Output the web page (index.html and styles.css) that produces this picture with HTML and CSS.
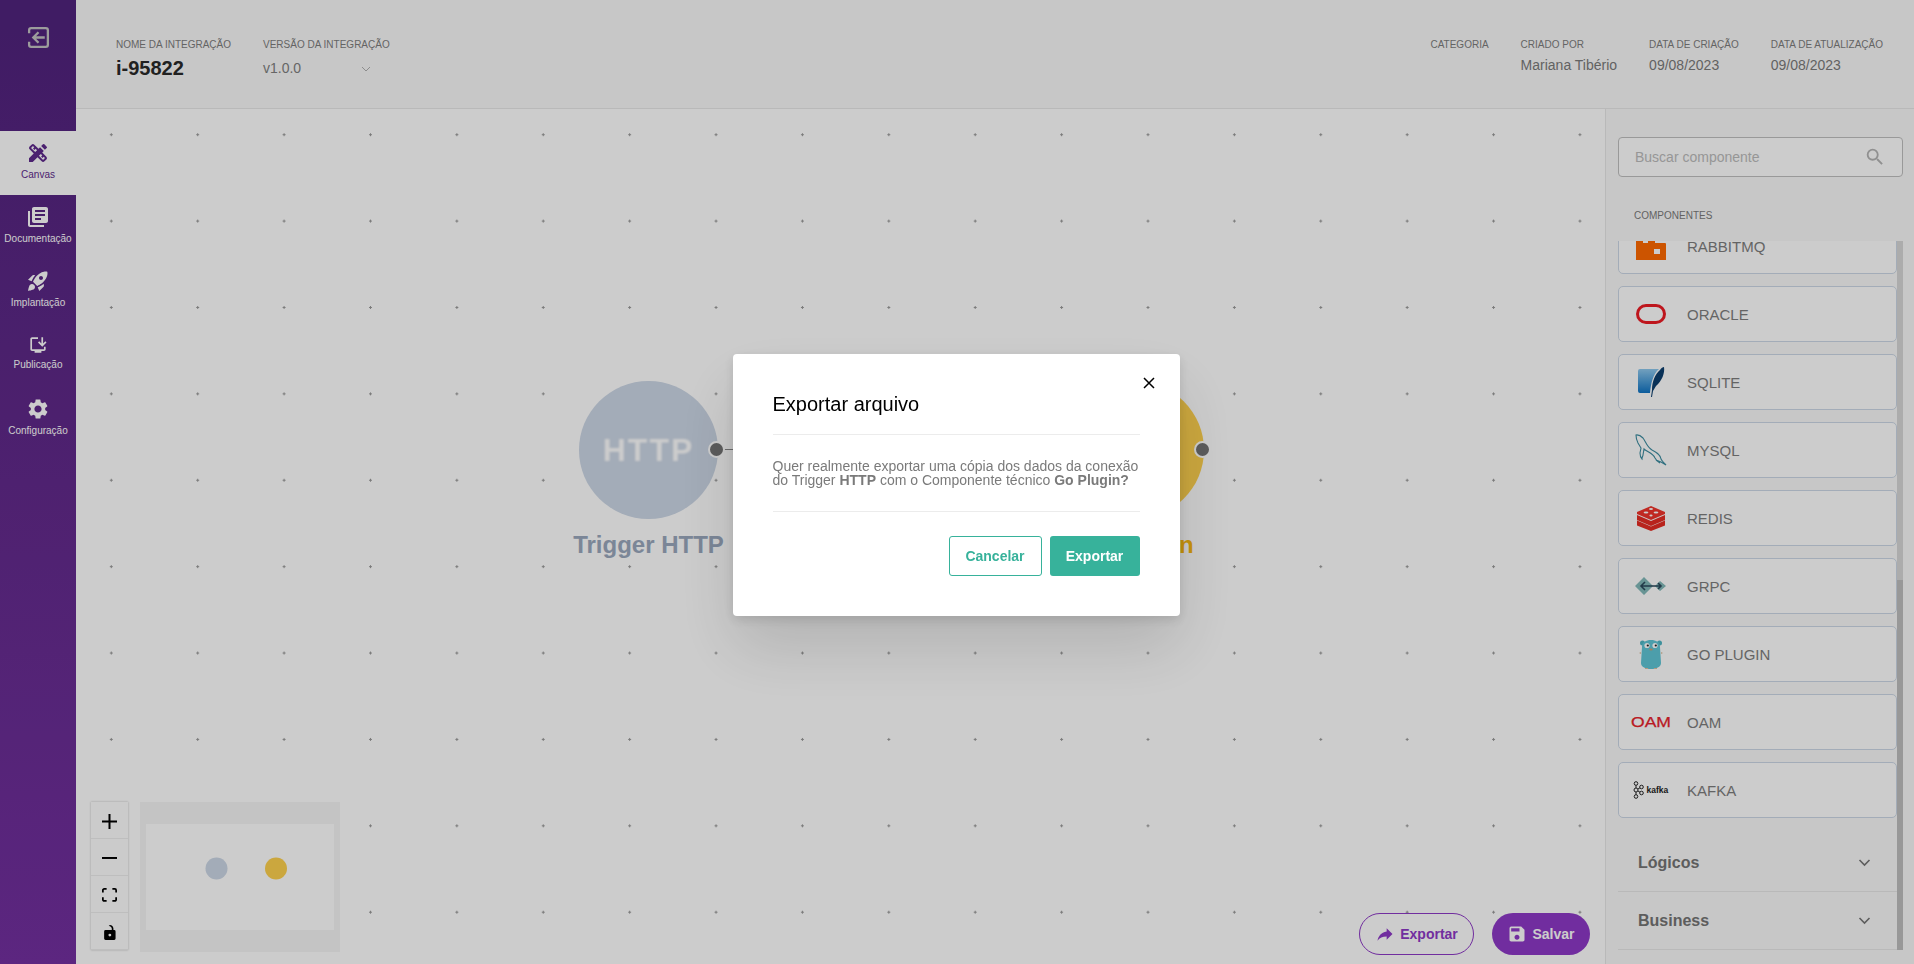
FILE: index.html
```html
<!DOCTYPE html>
<html lang="pt-BR">
<head>
  <meta charset="UTF-8">
  <title>Integração i-95822</title>
  <link rel="stylesheet" href="styles.css">
</head>
<body>

<div class="page">

  <!-- Menu lateral -->
  <nav class="side">
    <div class="side-top">
      <svg class="back-icon" viewBox="0 0 24 24" fill="none" stroke="currentColor" stroke-width="2.200"><path d="M3 8V5a2 2 0 0 1 2-2h14a2 2 0 0 1 2 2v14a2 2 0 0 1-2 2H5a2 2 0 0 1-2-2v-3"/><path d="M18 12H7M12 7l-5 5 5 5"/></svg>
    </div>
    <a class="side-item active">
      <svg viewBox="0 0 24 24"><path d="M16.24 11.51l1.57-1.57-3.75-3.75-1.57 1.57-4.14-4.13c-.78-.78-2.05-.78-2.83 0l-1.9 1.9c-.78.78-.78 2.05 0 2.83l4.13 4.13L3 17.25V21h3.75l4.76-4.76 4.13 4.13c.95.95 2.23.6 2.83 0l1.9-1.9c.78-.78.78-2.05 0-2.83l-4.13-4.13zm-7.06-.44L5.04 6.94l1.89-1.9L8.2 6.31 7.02 7.5l1.41 1.41 1.19-1.19 1.45 1.45-1.89 1.9zm7.88 7.89l-4.13-4.14 1.9-1.9 1.45 1.45-1.19 1.19 1.41 1.41 1.19-1.19 1.27 1.27-1.9 1.91zM20.71 7.04a.996.996 0 0 0 0-1.41l-2.34-2.34a1.001 1.001 0 0 0-1.41 0l-1.83 1.83 3.75 3.75 1.83-1.83z"/></svg>
      <span>Canvas</span>
    </a>
    <a class="side-item">
      <svg viewBox="0 0 24 24"><path d="M4 6H2v14c0 1.1.9 2 2 2h14v-2H4V6zm16-4H8c-1.1 0-2 .9-2 2v12c0 1.1.9 2 2 2h12c1.1 0 2-.9 2-2V4c0-1.1-.9-2-2-2zm-1 9H9V9h10v2zm-4 4H9v-2h6v2zm4-8H9V5h10v2z"/></svg>
      <span>Documentação</span>
    </a>
    <a class="side-item">
      <svg viewBox="0 0 24 24"><path d="M9.19 6.35c-2.04 2.29-3.44 5.58-3.57 5.89L2 10.69l4.05-4.05c.47-.47 1.15-.68 1.81-.55l1.33.26zM11.17 17s3.74-1.55 5.89-3.7c5.4-5.4 4.5-9.62 4.21-10.57-.95-.3-5.17-1.19-10.57 4.21C8.55 9.09 7 12.83 7 12.83L11.17 17zm6.48-2.19c-2.29 2.04-5.58 3.44-5.89 3.57L13.31 22l4.05-4.05c.47-.47.68-1.15.55-1.81l-.26-1.33zM9 18c0 .83-.34 1.58-.88 2.12C6.94 21.3 2 22 2 22s.7-4.94 1.88-6.12C4.42 15.34 5.17 15 6 15c1.66 0 3 1.34 3 3zm4-9c0-1.1.9-2 2-2s2 .9 2 2-.9 2-2 2-2-.9-2-2z"/></svg>
      <span>Implantação</span>
    </a>
    <a class="side-item tight">
      <svg viewBox="0 0 24 24"><path d="M19 17H5V5h7V3H5c-1.1 0-2 .9-2 2v12c0 1.1.9 2 2 2h3v2h8v-2h3c1.1 0 2-.9 2-2v-3h-2v3z"/><path d="M17 14l5-5-1.41-1.41L18 10.17V3h-2v7.17l-2.59-2.58L12 9z"/></svg>
      <span>Publicação</span>
    </a>
    <a class="side-item">
      <svg viewBox="0 0 24 24"><path d="M19.14 12.94c.04-.3.06-.61.06-.94 0-.32-.02-.64-.07-.94l2.03-1.58a.49.49 0 0 0 .12-.61l-1.92-3.32a.488.488 0 0 0-.59-.22l-2.39.96c-.5-.38-1.03-.7-1.62-.94l-.36-2.54a.484.484 0 0 0-.48-.41h-3.84c-.24 0-.43.17-.47.41l-.36 2.54c-.59.24-1.13.57-1.62.94l-2.39-.96c-.22-.08-.47 0-.59.22L2.74 8.87c-.12.21-.08.47.12.61l2.03 1.58c-.05.3-.09.63-.09.94s.02.64.07.94l-2.03 1.58a.49.49 0 0 0-.12.61l1.92 3.32c.12.22.37.29.59.22l2.39-.96c.5.38 1.03.7 1.62.94l.36 2.54c.05.24.24.41.48.41h3.84c.24 0 .44-.17.47-.41l.36-2.54c.59-.24 1.13-.56 1.62-.94l2.39.96c.22.08.47 0 .59-.22l1.92-3.32c.12-.22.07-.47-.12-.61l-2.01-1.58zM12 15.6c-1.98 0-3.6-1.62-3.6-3.6s1.62-3.6 3.6-3.6 3.6 1.62 3.6 3.6-1.62 3.6-3.6 3.6z"/></svg>
      <span>Configuração</span>
    </a>
  </nav>

  <div class="main">

    <!-- Cabeçalho -->
    <header class="top">
      <div class="field">
        <label>NOME DA INTEGRAÇÃO</label>
        <div class="name">i-95822</div>
      </div>
      <div class="field">
        <label>VERSÃO DA INTEGRAÇÃO</label>
        <div class="version">
          <span>v1.0.0</span>
          <svg viewBox="0 0 24 24" fill="none" stroke="currentColor" stroke-width="2"><path d="M4 8l8 8 8-8"/></svg>
        </div>
      </div>
      <div class="top-right">
        <div class="field"><label>CATEGORIA</label></div>
        <div class="field"><label>CRIADO POR</label><div class="value">Mariana Tibério</div></div>
        <div class="field"><label>DATA DE CRIAÇÃO</label><div class="value">09/08/2023</div></div>
        <div class="field"><label>DATA DE ATUALIZAÇÃO</label><div class="value">09/08/2023</div></div>
      </div>
    </header>

    <div class="work">

      <!-- Canvas -->
      <section class="canvas">
        <div class="edge"></div>

        <div class="node node-http">
          <div class="circle"><span>HTTP</span></div>
          <div class="port"></div>
          <div class="node-label">Trigger HTTP</div>
        </div>

        <div class="node node-go">
          <div class="circle"></div>
          <div class="port"></div>
          <div class="node-label">Go Plugin</div>
        </div>

        <div class="controls">
          <button><svg viewBox="0 0 32 32"><path d="M32 18.133H18.133V32h-4.266V18.133H0v-4.266h13.867V0h4.266v13.867H32z"/></svg></button>
          <button><svg viewBox="0 0 32 5"><path d="M0 0h32v4.2H0z"/></svg></button>
          <button><svg viewBox="0 0 32 30"><path d="M3.692 4.63c0-.53.4-.938.939-.938h5.215V0H4.708C2.13 0 0 2.054 0 4.63v5.216h3.692V4.631zM27.354 0h-5.2v3.692h5.17c.53 0 .984.4.984.939v5.215H32V4.631A4.624 4.624 0 0027.354 0zm.954 24.83c0 .532-.4.94-.939.94h-5.215v3.768h5.215c2.577 0 4.631-2.13 4.631-4.707v-5.139h-3.692v5.139zm-23.677.94c-.531 0-.939-.4-.939-.94v-5.138H0v5.139c0 2.577 2.13 4.707 4.708 4.707h5.138V25.77H4.631z"/></svg></button>
          <button><svg class="lock" viewBox="0 0 25 32"><path d="M21.333 10.667H19.81V7.619C19.81 3.429 16.38 0 12.19 0c-4.114 1.828-1.37 2.133-.305 2.438 1.676.305 4.42 2.59 4.42 5.181v3.048H3.047A3.056 3.056 0 000 13.714v15.238A3.056 3.056 0 003.048 32h18.285a3.056 3.056 0 003.048-3.048V13.714a3.056 3.056 0 00-3.048-3.047zM12.19 24.533a3.056 3.056 0 01-3.047-3.047 3.056 3.056 0 013.047-3.048 3.056 3.056 0 013.048 3.048 3.056 3.056 0 01-3.048 3.047z"/></svg></button>
        </div>

        <svg class="minimap" viewBox="0 0 200 150">
          <rect width="200" height="150" fill="#f6f6f6"/>
          <rect x="6" y="22" width="188" height="106" fill="#fff"/>
          <circle cx="76.5" cy="66.500" r="11" fill="#ccd7e6"/>
          <circle cx="136" cy="66.500" r="11" fill="#fed14e"/>
        </svg>

        <div class="actions">
          <button class="btn-round outline">
            <svg viewBox="0 0 24 24"><path d="M14 9V5l7 7-7 7v-4.1c-5 0-8.5 1.6-11 5.1 1-5 4-10 11-11z"/></svg>
            Exportar
          </button>
          <button class="btn-round solid">
            <svg viewBox="0 0 24 24"><path d="M17 3H5a2 2 0 0 0-2 2v14c0 1.1.9 2 2 2h14c1.1 0 2-.9 2-2V7l-4-4zm-5 16c-1.66 0-3-1.34-3-3s1.34-3 3-3 3 1.34 3 3-1.34 3-3 3zm3-10H5V5h10v4z"/></svg>
            Salvar
          </button>
        </div>
      </section>

      <!-- Componentes -->
      <aside class="panel">
        <div class="panel-head">
          <div class="search">
            <span>Buscar componente</span>
            <svg viewBox="0 0 24 24"><path d="M15.5 14h-.79l-.28-.27A6.47 6.47 0 0 0 16 9.5 6.5 6.5 0 1 0 9.5 16c1.61 0 3.09-.59 4.23-1.57l.27.28v.79l5 4.99L20.49 19l-4.99-5zm-6 0C7.01 14 5 11.99 5 9.5S7.01 5 9.5 5 14 7.01 14 9.5 11.99 14 9.5 14z"/></svg>
          </div>
          <div class="panel-title">COMPONENTES</div>
        </div>

        <div class="panel-scroll">
          <div class="list">
            <div class="comp first">
              <div class="logo"><svg width="30" height="30" viewBox="0 0 30 30"><path fill="#ff6a00" d="M0 29V2h7v10h5V2h7v10h10a1 1 0 0 1 1 1v16z"/><rect x="18" y="18" width="6" height="5" fill="#fff"/></svg></div>
              <span>RABBITMQ</span>
            </div>
            <div class="comp">
              <div class="logo"><svg width="30" height="20" viewBox="0 0 30 20"><rect x="1.500" y="1.500" width="27" height="17" rx="8.500" fill="none" stroke="#ee1c25" stroke-width="3"/></svg></div>
              <span>ORACLE</span>
            </div>
            <div class="comp">
              <div class="logo"><svg width="28" height="30" viewBox="0 0 28 30">
                <defs><linearGradient id="sq" x1="0" y1="0" x2="0" y2="1"><stop offset="0" stop-color="#8fc9ee"/><stop offset="1" stop-color="#0f74c4"/></linearGradient></defs>
                <path fill="url(#sq)" d="M3 2h19c-6 5-8 14-9 24H3a2 2 0 0 1-2-2V4a2 2 0 0 1 2-2z"/>
                <path fill="#0d3f6e" d="M27 0c1 6-2 14-8 19l-3 5-1 6h-1l1-7c0-8 3-16 8-20 1-2 3-3 4-3z"/>
              </svg></div>
              <span>SQLITE</span>
            </div>
            <div class="comp">
              <div class="logo"><svg width="32" height="32" viewBox="0 0 32 32" fill="none" stroke="#3d8ca0" stroke-width="1.100"><path d="M1 1c3-.5 5 1 7 3 3 4 4 9 9 12 4 2 8 4 9 9 1 2 3 4 5 6l-5-3-5-2 4 3c-2-1-4-3-5-5-2-5-8-6-11-9l-1 6c0 1-1 2-1 4-2-2-2-4-2-6l1-5-3-5C2 7 1 4 1 1z"/></svg></div>
              <span>MYSQL</span>
            </div>
            <div class="comp">
              <div class="logo"><svg width="28" height="25" viewBox="0 0 28 25">
                <path fill="#e72c23" d="M0 14.500v5l14 5.500 14-5.500v-5l-14 6zM0 9v5l14 6 14-6V9l-14 6z"/>
                <path fill="#f0342b" d="M14 0L0 6v2l14 6 14-6V6z"/>
                <ellipse cx="14" cy="3" rx="2" ry="1" fill="#fff"/><ellipse cx="9" cy="6.500" rx="2.400" ry="1.100" fill="#fff"/><ellipse cx="19" cy="6.500" rx="2.400" ry="1.100" fill="#fff"/><ellipse cx="14" cy="9.500" rx="1.600" ry="1" fill="#fff"/>
              </svg></div>
              <span>REDIS</span>
            </div>
            <div class="comp">
              <div class="logo"><svg width="32" height="18" viewBox="0 0 32 18">
                <path fill="#82b9b9" d="M0 9l9-9 9 9-9 9zM20 9l5-5 6 5-6 5z"/>
                <path fill="none" stroke="#2b4a5c" stroke-width="1.600" d="M6 9h20M10 5L6 9l4 4M23 6l3 3-3 3"/>
              </svg></div>
              <span>GRPC</span>
            </div>
            <div class="comp">
              <div class="logo"><svg width="24" height="30" viewBox="0 0 24 30">
                <circle cx="3.500" cy="4" r="2.500" fill="#4fb6c4"/><circle cx="20.500" cy="4" r="2.500" fill="#4fb6c4"/>
                <path fill="#5fc6d6" d="M3 8c0-5 4-7 9-7s9 2 9 7l1 16c0 4-5 6-10 6S2 28 2 24z"/>
                <circle cx="8" cy="6.500" r="2.600" fill="#fff"/><circle cx="16" cy="6.500" r="2.600" fill="#fff"/>
                <circle cx="8.800" cy="6.500" r="1.100" fill="#222"/><circle cx="16.800" cy="6.500" r="1.100" fill="#222"/>
                <ellipse cx="12" cy="10.500" rx="1.800" ry="1.100" fill="#c9a27a"/>
                <path fill="#e0c0a0" d="M0 14l2-1v2zM24 14l-2-1v2zM6 29h3v1H6zM15 29h3v1h-3z"/>
              </svg></div>
              <span>GO PLUGIN</span>
            </div>
            <div class="comp">
              <div class="logo"><svg class="logo-text" width="40" height="12" viewBox="0 0 40 12"><text class="oam-text" x="0" y="11" textLength="40" lengthAdjust="spacingAndGlyphs">OAM</text></svg></div>
              <span>OAM</span>
            </div>
            <div class="comp">
              <div class="logo"><svg class="logo-text" width="36" height="18" viewBox="0 0 36 18" fill="none" stroke="#222" stroke-width="1">
                <circle cx="3" cy="2.500" r="1.800"/><circle cx="3" cy="9" r="2"/><circle cx="3" cy="15.500" r="1.800"/><circle cx="8.500" cy="6" r="1.800"/><circle cx="8.500" cy="12" r="1.800"/>
                <path d="M3 4.300v2.700M3 11v2.700M5 8l1.900-1.100M5 10l1.900 1.100"/>
                <text class="kafka-text" x="13.500" y="12">kafka</text>
              </svg></div>
              <span>KAFKA</span>
            </div>

            <div class="acc first-acc">
              <b>Lógicos</b>
              <svg viewBox="0 0 24 24" fill="none" stroke="currentColor" stroke-width="2.600"><path d="M4 8l8 8 8-8"/></svg>
            </div>
            <div class="acc">
              <b>Business</b>
              <svg viewBox="0 0 24 24" fill="none" stroke="currentColor" stroke-width="2.600"><path d="M4 8l8 8 8-8"/></svg>
            </div>
          </div>
          <div class="scrollbar"><div class="thumb"></div></div>
        </div>
      </aside>
    </div>
  </div>
</div>

<!-- Modal -->
<div class="overlay">
  <div class="modal">
    <button class="modal-close"><svg viewBox="0 0 12 12" fill="none" stroke="#000" stroke-width="1.500"><path d="M1 1l10 10M11 1L1 11"/></svg></button>
    <h2>Exportar arquivo</h2>
    <p>Quer realmente exportar uma cópia dos dados da conexão do Trigger <b>HTTP</b> com o Componente técnico <b>Go Plugin?</b></p>
    <div class="modal-btns">
      <button class="btn-cancel">Cancelar</button>
      <button class="btn-ok">Exportar</button>
    </div>
  </div>
</div>

</body>
</html>
```

FILE: styles.css
```css
/* General */
* {
  box-sizing: border-box;
}

body {
  margin: 0;
  font-family: "Liberation Sans", Arial, sans-serif;
  color: #808080;
  overflow: hidden;
}

button {
  font-family: inherit;
  cursor: pointer;
}

svg:not([fill]) {
  fill: currentColor;
}

.page {
  display: flex;
  height: 100vh;
}

/* Side menu */
.side {
  width: 76px;
  flex: none;
  background: linear-gradient(180deg, #50237d 0%, #622a8c 50%, #7330a0 100%);
  color: #fff;
}

.side-top {
  height: 131px;
  display: flex;
  justify-content: center;
  padding-top: 25px;
}

.back-icon {
  width: 25px;
  height: 25px;
  color: #c4c4c4;
}

.side-item {
  height: 64px;
  padding-top: 10px;
  display: flex;
  flex-direction: column;
  align-items: center;
  gap: 4px;
  font-size: 10px;
  line-height: 12px;
}

.side-item svg {
  width: 24px;
  height: 24px;
}

.side-item.active {
  background: #fff;
  color: #5e2a8c;
}

.side-item.tight {
  gap: 2px;
}

.side-item.tight svg {
  transform: scale(.85);
}

/* Header */
.main {
  flex: 1;
  min-width: 0;
  display: flex;
  flex-direction: column;
}

.top {
  height: 109px;
  flex: none;
  display: flex;
  gap: 32px;
  padding: 39px 31px 0 40px;
  background: #f9f9f9;
  border-bottom: 1px solid #e8e8e8;
}

.top-right {
  margin-left: auto;
  display: flex;
  gap: 32px;
}

.field label {
  display: block;
  font-size: 10px;
  line-height: 12px;
  color: #7d7d7d;
  white-space: nowrap;
}

.name {
  margin-top: 5px;
  font-size: 20px;
  line-height: 24px;
  font-weight: 700;
  color: #2a2a2a;
}

.version {
  margin-top: 9px;
  display: flex;
  align-items: center;
  font-size: 14px;
  line-height: 16px;
  color: #808080;
}

.version svg {
  width: 12px;
  height: 12px;
  margin-left: 59px;
  margin-top: 2px;
  color: #b0b0b0;
}

.value {
  margin-top: 6px;
  font-size: 14px;
  line-height: 16px;
  color: #7b7b7b;
  white-space: nowrap;
}

/* Canvas */
.work {
  flex: 1;
  display: flex;
  min-height: 0;
}

.canvas {
  flex: 1;
  position: relative;
  background-color: #fff;
  background-image: radial-gradient(circle, #9a9a9a 1px, transparent 1.4px);
  background-size: 86.4px 86.4px;
  background-position: -7.9px -17.5px;
}

.edge {
  position: absolute;
  left: 640px;
  top: 340px;
  width: 484px;
  height: 1px;
  background: #8a8a8a;
}

.node {
  position: absolute;
  top: 272px;
  width: 139px;
  display: flex;
  flex-direction: column;
  align-items: center;
}

.node-http {
  left: 503px;
}

.node-go {
  left: 989px;
}

.circle {
  width: 139px;
  height: 138px;
  border-radius: 50%;
  display: flex;
  align-items: center;
  justify-content: center;
  font-size: 32px;
  font-weight: 700;
  letter-spacing: 2px;
  color: #fff;
}

.circle span {
  filter: blur(.8px);
}

.node-http .circle {
  background: #ccd7e6;
}

.node-go .circle {
  background: #fed14e;
}

.port {
  position: absolute;
  right: -7px;
  top: 60px;
  width: 17px;
  height: 17px;
  border-radius: 50%;
  background: #737373;
  border: 2px solid #fff;
}

.node-label {
  margin-top: 12px;
  font-size: 24px;
  line-height: 28px;
  font-weight: 700;
  white-space: nowrap;
}

.node-http .node-label {
  color: #9aa8bd;
}

.node-go .node-label {
  margin-left: 5px;
  color: #f8b80f;
}

.controls {
  position: absolute;
  left: 15px;
  bottom: 14px;
  width: 37px;
  display: flex;
  flex-direction: column;
  box-shadow: 0 0 2px rgba(0, 0, 0, .25);
}

.controls button {
  height: 37px;
  padding: 2px 0 0;
  background: #fefefe;
  border: 0;
  border-bottom: 1px solid #eee;
  display: flex;
  align-items: center;
  justify-content: center;
  color: #000;
}

.controls svg {
  width: 15px;
  max-height: 15px;
}

.controls .lock {
  width: 12px;
}

.minimap {
  position: absolute;
  left: 64px;
  bottom: 12px;
  width: 200px;
  height: 150px;
}

.actions {
  position: absolute;
  right: 15px;
  bottom: 9px;
  display: flex;
  gap: 18px;
}

.btn-round {
  height: 42px;
  border-radius: 21px;
  display: flex;
  align-items: center;
  justify-content: center;
  gap: 5px;
  font-size: 14px;
  font-weight: 700;
}

.btn-round svg {
  width: 20px;
  height: 20px;
}

.btn-round.outline {
  width: 115px;
  background: #fff;
  border: 1.5px solid #8e39c7;
  color: #8e39c7;
}

.btn-round.solid {
  width: 98px;
  background: #8e39c7;
  border: 0;
  color: #fff;
}

/* Components panel */
.panel {
  width: 309px;
  flex: none;
  display: flex;
  flex-direction: column;
  background: #f9f9f9;
  border-left: 1px solid #e8e8e8;
}

.panel-head {
  height: 132px;
  flex: none;
  padding: 28px 11px 0 12px;
}

.search {
  height: 40px;
  display: flex;
  align-items: center;
  justify-content: space-between;
  padding: 0 16px 0 16px;
  background: #fff;
  border: 1px solid #c0c0c0;
  border-radius: 4px;
  font-size: 14px;
  color: #bcbcbc;
}

.search svg {
  width: 22px;
  height: 22px;
  color: #b5b5b5;
}

.panel-title {
  margin-top: 33px;
  padding-left: 16px;
  font-size: 10px;
  line-height: 12px;
  color: #7b7b7b;
}

.panel-scroll {
  height: 709px;
  flex: none;
  display: flex;
  padding: 0 11px 0 12px;
}

.list {
  flex: 1;
  min-width: 0;
  overflow: hidden;
}

.comp {
  height: 56px;
  margin-bottom: 12px;
  padding-left: 12px;
  display: flex;
  align-items: center;
  gap: 16px;
  background: #fff;
  border: 1px solid #ccd7e6;
  border-radius: 5px;
  font-size: 15px;
  color: #7e7e7e;
}

.comp.first {
  margin-top: -23px;
}

.comp span {
  padding-top: 1px;
}

.logo {
  width: 40px;
  flex: none;
  display: flex;
  align-items: center;
  justify-content: center;
}

.logo-text {
  overflow: visible;
}

.oam-text {
  font-size: 14px;
  fill: #e8222c;
  stroke: #e8222c;
  stroke-width: .25px;
}

.kafka-text {
  font-size: 8.5px;
  font-weight: 700;
  fill: #222;
  stroke: none;
}

.acc {
  height: 58px;
  padding: 0 25px 0 20px;
  display: flex;
  align-items: center;
  justify-content: space-between;
  border-bottom: 1px solid #e8e8e8;
  color: #757575;
  font-size: 16px;
}

.first-acc {
  margin-top: 16px;
}

.acc svg {
  width: 15px;
  height: 15px;
}

.scrollbar {
  width: 6px;
  flex: none;
  display: flex;
  flex-direction: column;
  justify-content: flex-end;
  background: #d8d8d8;
}

.thumb {
  height: 370px;
  background: #bfbfbf;
}

/* Modal */
.overlay {
  position: fixed;
  inset: 0;
  display: flex;
  align-items: center;
  justify-content: center;
  padding: 6px 2px 0 0;
  background: rgba(0, 0, 0, .2);
}

.modal {
  position: relative;
  width: 447px;
  padding: 38px 40px 40px;
  background: #fff;
  border-radius: 4px;
  box-shadow: 0 32px 64px rgba(0, 0, 0, .13), 0 4px 12px rgba(0, 0, 0, .12);
}

.modal-close {
  position: absolute;
  top: 23px;
  right: 25px;
  width: 12px;
  height: 12px;
  padding: 0;
  background: none;
  border: 0;
  display: flex;
}

.modal h2 {
  margin: 0;
  padding-bottom: 18px;
  font-size: 20px;
  line-height: 24px;
  font-weight: 400;
  color: #000;
  border-bottom: 1px solid #ececec;
}

.modal p {
  margin: 0;
  padding: 24px 0;
  font-size: 14px;
  line-height: 14px;
  color: #7a7a7a;
  border-bottom: 1px solid #ececec;
}

.modal-btns {
  margin-top: 24px;
  display: flex;
  justify-content: flex-end;
  gap: 8px;
}

.modal-btns button {
  height: 40px;
  border-radius: 3px;
  font-size: 14px;
  font-weight: 700;
}

.btn-cancel {
  width: 93px;
  background: #fff;
  border: 1px solid #37b29b;
  color: #37b29b;
}

.btn-ok {
  width: 90px;
  background: #37b29b;
  border: 0;
  color: #fff;
}
```
